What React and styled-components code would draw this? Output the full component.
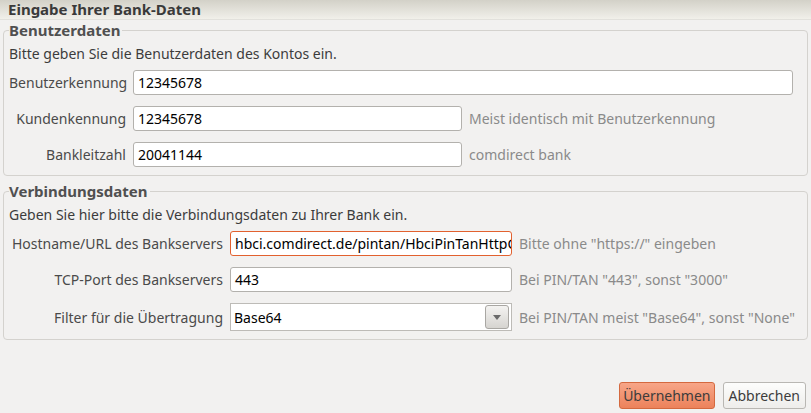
import styled, { createGlobalStyle } from 'styled-components'

const Global = createGlobalStyle`
	html, body {
		margin: 0;
		background: #f2f1f0;
		font-family: "Noto Sans", "DejaVu Sans", sans-serif;
		font-size: 14px;
		color: #3c3c3c;
	}
`

const Page = styled.div`
	width: 811px;
	height: 413px;
	display: flex;
	flex-direction: column;
	overflow: hidden;
`

const TitleBar = styled.div`
	height: 19px;
	padding-left: 8px;
	background: linear-gradient(#d3d1c8, #f1f0ea);
	border-bottom: 1px solid #e2e1dc;
	font-weight: bold;
	font-size: 15px;
	line-height: 19px;
	color: #3a3a3a;
`

const Group = styled.fieldset`
	margin: ${p => p.$top}px 3px 0 3px;
	padding: 0 5px 8px 5px;
	border: 1px solid #d4d2ce;
	border-radius: 4px;
	min-width: 0;
`

const Legend = styled.legend`
	padding: 0 2px 0 0;
	margin-left: 0;
	font-weight: bold;
	font-size: 15px;
	color: #505050;
	line-height: 17px;
`

const Intro = styled.div`
	margin: 5px 0 7px 0;
	color: #3c3c3c;
`

const Form = styled.div`
	display: grid;
	grid-template-columns: ${p => p.$label}px ${p => p.$field}px 1fr;
	column-gap: 7px;
	row-gap: 11px;
	align-items: center;
`

const Label = styled.label`
	text-align: right;
	color: #4a4a4a;
	white-space: nowrap;
`

const Input = styled.div`
	box-sizing: border-box;
	height: 25px;
	padding: 0 4px;
	border: 1px solid ${p => (p.$focus ? '#e2612f' : '#b3b1ad')};
	border-radius: 3px;
	background: #fff;
	color: #000;
	line-height: 23px;
	white-space: nowrap;
	overflow: hidden;
	grid-column: ${p => (p.$wide ? '2 / 4' : 'auto')};
	margin-right: ${p => (p.$wide ? '9px' : '0')};
`

const Hint = styled.span`
	color: #8a8a8a;
	white-space: nowrap;
`

const Combo = styled.div`
	height: 28px;
	box-sizing: border-box;
	display: flex;
	align-items: center;
	justify-content: space-between;
	padding: 0 2px 0 3px;
	border: 1px solid #bdbbb7;
	background: #fff;
	color: #000;
`

const ComboButton = styled.div`
	width: 24px;
	height: 24px;
	box-sizing: border-box;
	border: 1px solid #a9a7a3;
	border-radius: 3px;
	background: linear-gradient(#f4f3f1, #d6d4d0);
	display: flex;
	align-items: center;
	justify-content: center;
`

const Footer = styled.div`
	margin-top: auto;
	padding: 0 5px 4px 0;
	display: flex;
	justify-content: flex-end;
	gap: 8px;
`

const Button = styled.button`
	height: 27px;
	padding: 0 ${p => (p.$primary ? 3 : 5)}px;
	font: inherit;
	color: #3c3c3c;
	border-radius: 3px;
	border: 1px solid ${p => (p.$primary ? '#d4693f' : '#b9b7b3')};
	background: ${p => (p.$primary ? 'linear-gradient(#f7a688, #ec825b)' : 'linear-gradient(#fdfdfc, #eeedeb)')};
`

export default function App() {
	return (
		<Page>
			<Global />
			<TitleBar>Eingabe Ihrer Bank-Daten</TitleBar>
			<Group $top={2}>
				<Legend>Benutzerdaten</Legend>
				<Intro>Bitte geben Sie die Benutzerdaten des Kontos ein.</Intro>
				<Form $label={117} $field={329}>
					<Label>Benutzerkennung</Label>
					<Input $wide>12345678</Input>
					<Label>Kundenkennung</Label>
					<Input>12345678</Input>
					<Hint>Meist identisch mit Benutzerkennung</Hint>
					<Label>Bankleitzahl</Label>
					<Input>20041144</Input>
					<Hint>comdirect bank</Hint>
				</Form>
			</Group>
			<Group $top={7}>
				<Legend>Verbindungsdaten</Legend>
				<Intro>Geben Sie hier bitte die Verbindungsdaten zu Ihrer Bank ein.</Intro>
				<Form $label={214} $field={282}>
					<Label>Hostname/URL des Bankservers</Label>
					<Input $focus>hbci.comdirect.de/pintan/HbciPinTanHttpGate</Input>
					<Hint>Bitte ohne "https://" eingeben</Hint>
					<Label>TCP-Port des Bankservers</Label>
					<Input>443</Input>
					<Hint>Bei PIN/TAN "443", sonst "3000"</Hint>
					<Label>Filter für die Übertragung</Label>
					<Combo>
						Base64
						<ComboButton>
							<svg width="8" height="5" viewBox="0 0 8 5">
								<path d="M0 0 L8 0 L4 5 Z" fill="#6a6a6a" />
							</svg>
						</ComboButton>
					</Combo>
					<Hint>Bei PIN/TAN meist "Base64", sonst "None"</Hint>
				</Form>
			</Group>
			<Footer>
				<Button $primary>Übernehmen</Button>
				<Button>Abbrechen</Button>
			</Footer>
		</Page>
	)
}
